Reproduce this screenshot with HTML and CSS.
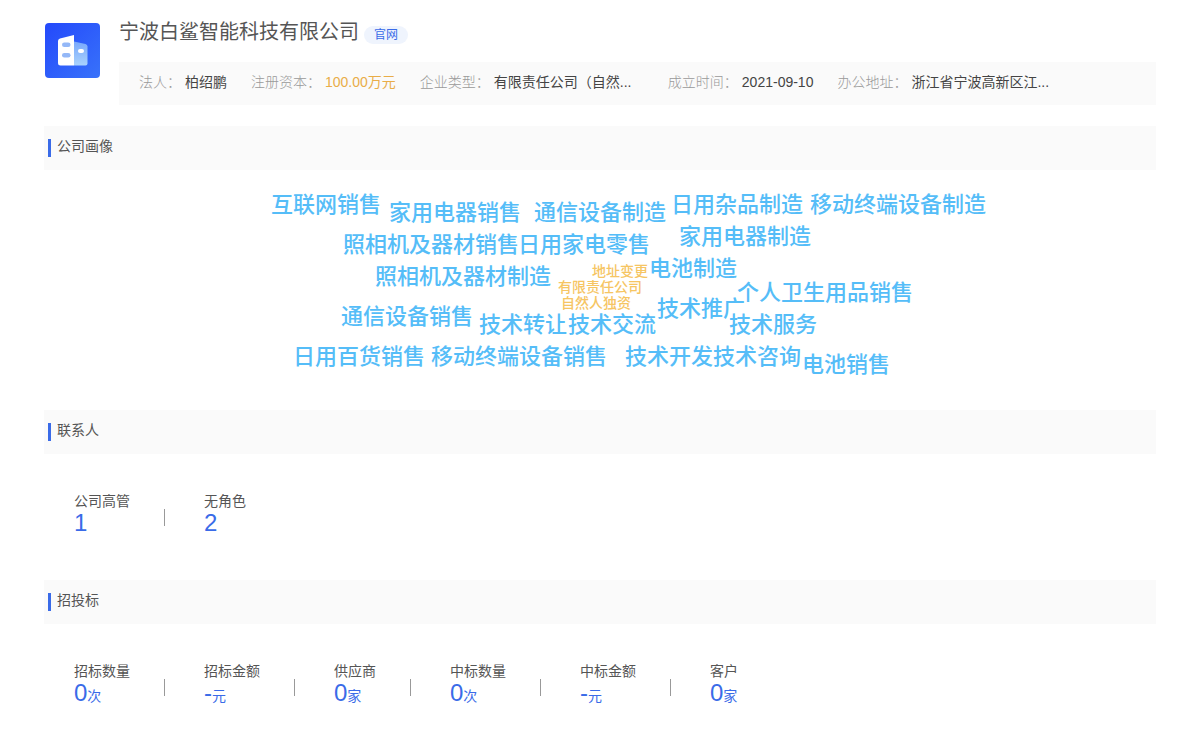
FILE: index.html
```
<!DOCTYPE html>
<html lang="zh-CN">
<head>
<meta charset="utf-8">
<meta name="viewport" content="width=device-width, initial-scale=1">
<title>宁波白鲨智能科技有限公司</title>
<link rel="stylesheet" href="styles.css">
</head>
<body>
<header class="company">
  <svg class="logo" viewBox="0 0 55 55" aria-hidden="true">
    <defs>
      <linearGradient id="tile" x1="0" y1="0" x2="1" y2="1">
        <stop offset="0" stop-color="#2449fb"/>
        <stop offset="1" stop-color="#3872fa"/>
      </linearGradient>
      <linearGradient id="wing" x1="0" y1="0" x2="0" y2="1">
        <stop offset="0" stop-color="#79a8fb"/>
        <stop offset="1" stop-color="#a9d2fd"/>
      </linearGradient>
    </defs>
    <rect width="55" height="55" rx="4" fill="url(#tile)"/>
    <path d="M29 18.500L40.500 21Q42.500 21.500 42.500 23.500V40.500Q42.500 42.500 40.500 42.500H29Z" fill="url(#wing)"/>
    <path d="M15 15.500L29 12V42.500H15.500Q13 42.500 13 40V18Q13 16 15 15.500Z" fill="#fff"/>
    <rect x="17" y="19.500" width="8.500" height="4.500" rx="2.250" fill="#94b8f7"/>
    <rect x="17" y="30" width="8.500" height="4.500" rx="2.250" fill="#94b8f7"/>
    <rect x="33" y="26" width="6" height="4" rx="2" fill="#fff"/>
  </svg>
  <div class="company-main">
    <div class="title-row">
      <h1 class="company-name">宁波白鲨智能科技有限公司</h1>
      <a class="site-link" href="#">官网</a>
    </div>
    <dl class="facts">
      <div class="fact"><dt>法人：</dt><dd>柏绍鹏</dd></div>
      <div class="fact"><dt>注册资本：</dt><dd class="capital">100.00万元</dd></div>
      <div class="fact"><dt>企业类型：</dt><dd class="clipped">有限责任公司（自然...</dd></div>
      <div class="fact"><dt>成立时间：</dt><dd>2021-09-10</dd></div>
      <div class="fact"><dt>办公地址：</dt><dd class="clipped">浙江省宁波高新区江...</dd></div>
    </dl>
  </div>
</header>

<section>
  <h2 class="section-title">公司画像</h2>
  <div class="cloud">
    <ul class="cloud-plane">
      <li style="left:71px;top:24px">互联网销售</li>
      <li style="left:189px;top:32px">家用电器销售</li>
      <li style="left:334px;top:32px">通信设备制造</li>
      <li style="left:471px;top:24px">日用杂品制造</li>
      <li style="left:610px;top:24px">移动终端设备制造</li>
      <li style="left:143px;top:64px">照相机及器材销售</li>
      <li style="left:318px;top:64px">日用家电零售</li>
      <li style="left:479px;top:56px">家用电器制造</li>
      <li style="left:175px;top:96px">照相机及器材制造</li>
      <li style="left:449px;top:88px">电池制造</li>
      <li style="left:537px;top:112px">个人卫生用品销售</li>
      <li style="left:457px;top:128px">技术推广</li>
      <li style="left:141px;top:136px">通信设备销售</li>
      <li style="left:279px;top:144px">技术转让</li>
      <li style="left:368px;top:144px">技术交流</li>
      <li style="left:529px;top:144px">技术服务</li>
      <li style="left:93px;top:176px">日用百货销售</li>
      <li style="left:231px;top:176px">移动终端设备销售</li>
      <li style="left:425px;top:176px">技术开发</li>
      <li style="left:513px;top:176px">技术咨询</li>
      <li style="left:602px;top:184px">电池销售</li>
      <li class="minor" style="left:392px;top:91px">地址变更</li>
      <li class="minor" style="left:358px;top:107px">有限责任公司</li>
      <li class="minor" style="left:361px;top:123px">自然人独资</li>
    </ul>
  </div>
</section>

<section>
  <h2 class="section-title">联系人</h2>
  <dl class="stats">
    <div class="stat"><dt>公司高管</dt><dd>1</dd></div>
    <div class="stat"><dt>无角色</dt><dd>2</dd></div>
  </dl>
</section>

<section>
  <h2 class="section-title">招投标</h2>
  <dl class="stats">
    <div class="stat"><dt>招标数量</dt><dd>0<small>次</small></dd></div>
    <div class="stat"><dt>招标金额</dt><dd>-<small>元</small></dd></div>
    <div class="stat"><dt>供应商</dt><dd>0<small>家</small></dd></div>
    <div class="stat"><dt>中标数量</dt><dd>0<small>次</small></dd></div>
    <div class="stat"><dt>中标金额</dt><dd>-<small>元</small></dd></div>
    <div class="stat"><dt>客户</dt><dd>0<small>家</small></dd></div>
  </dl>
</section>
</body>
</html>
```
FILE: styles.css
```
* {
  box-sizing: border-box;
  margin: 0;
  padding: 0;
}

body {
  padding: 16px 44px;
  background: #fff;
  color: #555;
  font: 14px/20px "Liberation Sans", "Noto Sans CJK SC", sans-serif;
}

.company {
  display: flex;
  gap: 19px;
  margin-bottom: 21px;
  padding-left: 1px;
}

.logo {
  flex: none;
  width: 55px;
  height: 55px;
  margin-top: 7px;
}

.company-main {
  flex: 1;
  min-width: 0;
}

.title-row {
  display: flex;
  align-items: flex-start;
  gap: 5px;
  height: 46px;
}

.company-name {
  color: #555;
  font-size: 20px;
  font-weight: 400;
  line-height: 32px;
}

.site-link {
  margin-top: 10px;
  padding: 0 10px;
  border-radius: 9px;
  background: #eff4fd;
  color: #3a6be8;
  font-size: 12px;
  line-height: 18px;
  text-decoration: none;
}

.facts {
  display: flex;
  flex-wrap: wrap;
  gap: 0 24px;
  padding: 10px 20px 13px;
  background: #fafafa;
}

.fact {
  display: flex;
  gap: 4px;
}

.fact dt {
  color: #999;
  font-weight: 300;
}

.fact dd {
  color: #444;
}

.fact .capital {
  color: #e9ad48;
}

.fact .clipped {
  width: 150px;
  overflow: hidden;
  white-space: nowrap;
}

.section-title {
  display: flex;
  align-items: flex-start;
  gap: 6px;
  padding: 10px 4px 13px;
  background: #fafafa;
  font-size: 14px;
  font-weight: 400;
  line-height: 21px;
}

.section-title::before {
  content: "";
  width: 3px;
  height: 18px;
  margin-top: 3px;
  background: #3a6be8;
}

.cloud {
  height: 240px;
}

/* Words are placed freely on a plane centred in the section. */
.cloud-plane {
  position: relative;
  width: 800px;
  margin: 0 auto;
  list-style: none;
}

.cloud-plane li {
  position: absolute;
  color: #55bdf8;
  font-size: 22px;
  font-weight: 500;
  line-height: 22px;
  white-space: nowrap;
}

.cloud-plane .minor {
  color: #f6c563;
  font-size: 14px;
  line-height: 20px;
}

.stats {
  display: flex;
  flex-wrap: wrap;
  padding: 37px 30px 43px;
}

.stat {
  position: relative;
  margin-right: 74px;
}

.stat:not(:last-child)::after {
  content: "";
  position: absolute;
  top: 18px;
  right: -35px;
  width: 1px;
  height: 17px;
  background: #999;
}

.stat dd {
  padding-bottom: 2px;
  color: #3a6be8;
  font-size: 24px;
  line-height: 24px;
}

.stat small {
  font-size: 14px;
}
```
